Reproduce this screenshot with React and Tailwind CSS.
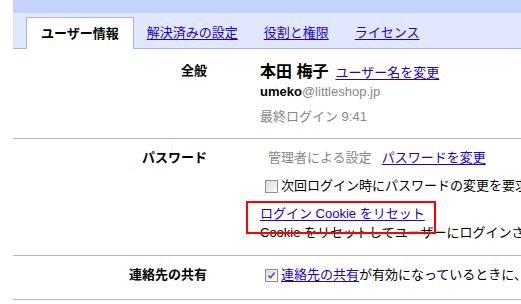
const tabs = [
  { label: "ユーザー情報", active: true },
  { label: "解決済みの設定" },
  { label: "役割と権限" },
  { label: "ライセンス" },
];

const linkClass = "text-[#2200cc] underline underline-offset-2";

const Checkbox = ({ checked }) => {
  return (
    <span className="mr-[3px] inline-flex h-[13px] w-[13px] shrink-0 items-center justify-center border border-[#8f8f8f] bg-gradient-to-br from-[#dcdcdc] to-[#fbfbfb]">
      {checked && (
        <svg width="9" height="9" viewBox="0 0 9 9">
          <path
            d="M1.5 4.5 L3.5 6.8 L7.6 1.6"
            fill="none"
            stroke="#4a5f97"
            strokeWidth="1.6"
          />
        </svg>
      )}
    </span>
  );
};

const Row = ({ label, children, className }) => {
  return (
    <div className={`flex border-b border-[#b8b8b8] ${className}`}>
      <div className="w-[194px] shrink-0 text-right font-bold leading-[18px] text-black">
        {label}
      </div>
      <div className="ml-[53px] min-w-0 flex-1">{children}</div>
    </div>
  );
};

const App = () => {
  return (
    <div
      className="relative h-[304px] w-[521px] overflow-hidden whitespace-nowrap bg-white text-[13px] text-black"
      style={{ fontFamily: '"Liberation Sans", "Noto Sans CJK JP", sans-serif' }}
    >
      <div className="ml-[13px]">
        <div className="h-[13px] bg-[#c3d3fb]" />
        <div className="flex h-[36px] items-end border-b border-[#a4b7e6] bg-[#e1e8fd] pl-[13px]">
          {tabs.map((tab) =>
            tab.active ? (
              <div
                key={tab.label}
                className="-mb-px flex h-[32px] items-center border border-b-0 border-[#a4b7e6] bg-white px-[14px] font-bold"
              >
                {tab.label}
              </div>
            ) : (
              <div
                key={tab.label}
                className="flex h-[31px] items-center px-[13px]"
              >
                <a href="#" className={linkClass}>
                  {tab.label}
                </a>
              </div>
            )
          )}
        </div>

        <Row label="全般" className="pt-[13px] pb-[12px]">
          <div className="flex items-baseline leading-[20px]">
            <span className="text-[16px] font-bold">本田 梅子</span>
            <a href="#" className={`${linkClass} ml-[7px]`}>
              ユーザー名を変更
            </a>
          </div>
          <div className="leading-[18px]">
            <span className="font-bold">umeko</span>
            <span className="text-[#888]">@littleshop.jp</span>
          </div>
          <div className="mt-[7px] leading-[18px] text-[#888]">
            最終ログイン 9:41
          </div>
        </Row>

        <Row label="パスワード" className="pt-[10px] pb-[13px]">
          <div className="ml-[8px] leading-[18px]">
            <span className="text-[#888]">管理者による設定</span>
            <a href="#" className={`${linkClass} ml-[10px]`}>
              パスワードを変更
            </a>
          </div>
          <div className="ml-[5px] mt-[10px] flex items-center leading-[18px]">
            <Checkbox />
            <span>次回ログイン時にパスワードの変更を要求する</span>
          </div>
          <div className="mt-[10px] leading-[18px]">
            <a href="#" className={linkClass}>
              ログイン Cookie をリセット
            </a>
          </div>
          <div className="mt-[1px] leading-[18px]">
            Cookie をリセットしてユーザーにログインさせます
          </div>
        </Row>

        <Row label="連絡先の共有" className="pt-[10px] pb-[15px]">
          <div className="ml-[5px] flex items-center leading-[18px]">
            <Checkbox checked />
            <a href="#" className={linkClass}>
              連絡先の共有
            </a>
            <span>が有効になっているときに、</span>
          </div>
        </Row>
      </div>

      <div className="absolute left-[246px] top-[201px] h-[33px] w-[190px] border-2 border-[#ff0000]" />
    </div>
  );
};

export default App;
